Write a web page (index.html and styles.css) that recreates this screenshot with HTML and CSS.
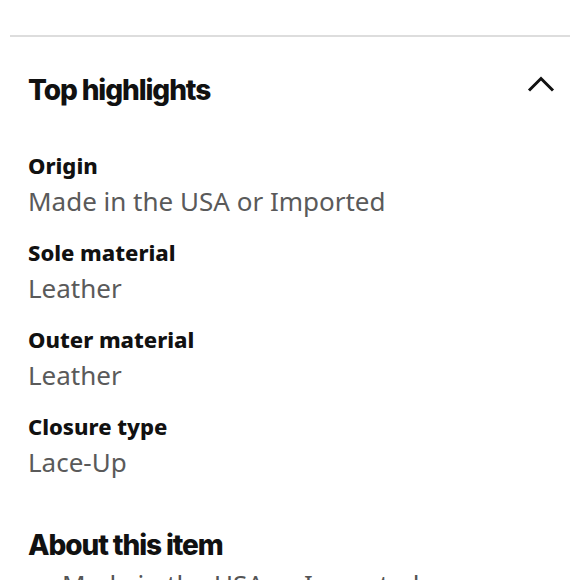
FILE: index.html
```html
<!DOCTYPE html>
<html lang="en">
<head>
<meta charset="utf-8">
<title>Top highlights</title>
<link rel="stylesheet" href="styles.css">
</head>
<body>
<div class="page">
  <hr class="divider">
  <section class="highlights">
    <div class="section-head">
      <h2 class="section-title">Top highlights</h2>
      <button class="toggle" aria-label="Collapse">
        <svg width="28" height="16" viewBox="0 0 28 16" aria-hidden="true">
          <path d="M2 14.5 L14 2.5 L26 14.5" fill="none" stroke="#111" stroke-width="3"/>
        </svg>
      </button>
    </div>
    <dl class="specs">
      <div class="spec">
        <dt>Origin</dt>
        <dd>Made in the USA or Imported</dd>
      </div>
      <div class="spec">
        <dt>Sole material</dt>
        <dd>Leather</dd>
      </div>
      <div class="spec">
        <dt>Outer material</dt>
        <dd>Leather</dd>
      </div>
      <div class="spec">
        <dt>Closure type</dt>
        <dd>Lace-Up</dd>
      </div>
    </dl>
  </section>
  <section class="about">
    <h2 class="section-title">About this item</h2>
    <ul class="bullets">
      <li>Made in the USA or Imported</li>
    </ul>
  </section>
</div>
</body>
</html>
```
FILE: styles.css
```css
html, body {
  margin: 0;
  padding: 0;
  background: #fff;
}

body {
  font-family: "Noto Sans", "Open Sans", sans-serif;
  color: #111;
  overflow: hidden;
}

.page {
  padding-top: 35px;
}

.divider {
  margin: 0 10px;
  border: 0;
  border-top: 2px solid #dddddd;
  height: 0;
}

.highlights,
.about {
  padding: 0 25px 0 28px;
}

.section-head {
  display: flex;
  align-items: center;
  justify-content: space-between;
  padding-top: 36px;
}

.section-title {
  margin: 0;
  font-family: "Inter", "Roboto", sans-serif;
  font-weight: 800;
  font-size: 28px;
  line-height: 34px;
  letter-spacing: -1.1px;
  color: #111;
}

.toggle {
  border: 0;
  background: none;
  padding: 0;
  margin: 0;
  display: flex;
  width: 28px;
  height: 16px;
  margin-top: -12px;
}

.specs {
  margin: 43px 0 0;
  display: flex;
  flex-direction: column;
  gap: 14px;
}

.spec dt {
  font-weight: 800;
  font-size: 22px;
  line-height: 30px;
  color: #111;
}

.spec dd {
  margin: 0;
  font-size: 26px;
  line-height: 43px;
  color: #5a5a5a;
}

.about {
  margin-top: 44px;
}

.bullets {
  margin: 2px 0 0;
  padding-left: 34px;
  list-style: none;
}

.bullets li {
  font-size: 26px;
  line-height: 40px;
  color: #555;
}
```
